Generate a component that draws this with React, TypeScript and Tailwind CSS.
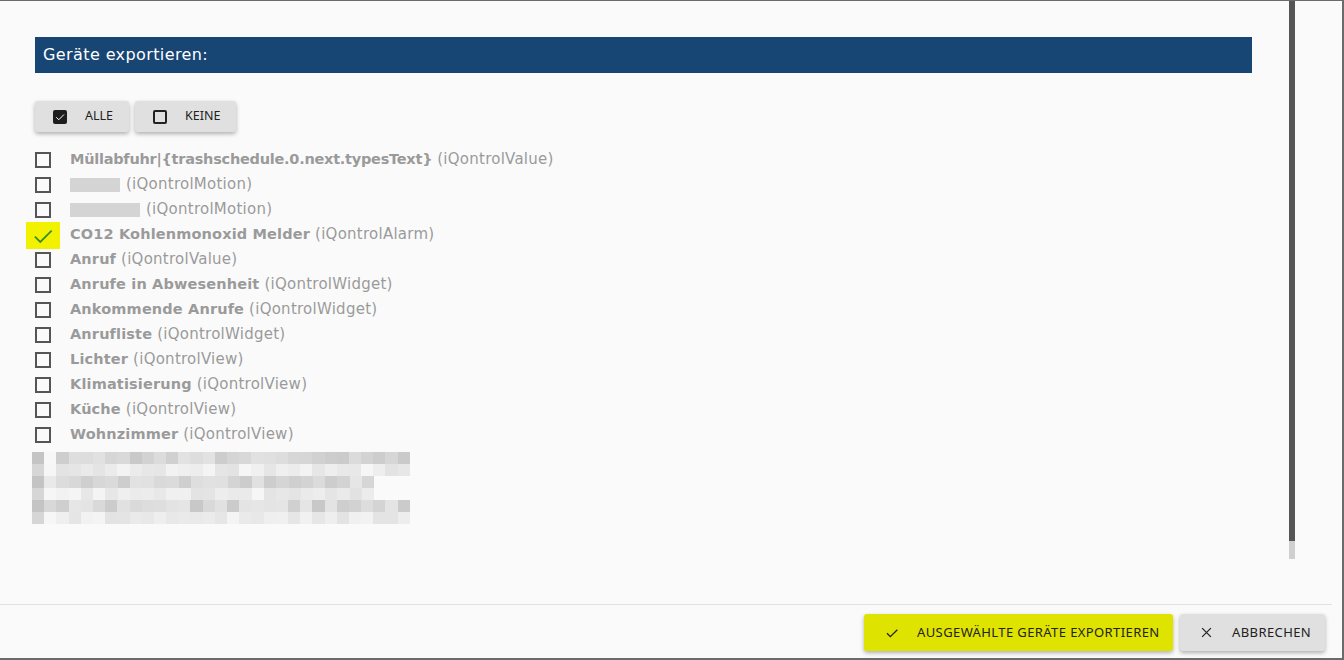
import React from "react";

type Device = { name: string; type: string; checked?: boolean; masked?: number; tight?: boolean };

const devices: Device[] = [
  { name: "Müllabfuhr|{trashschedule.0.next.typesText}", type: "iQontrolValue", tight: true },
  { name: "", type: "iQontrolMotion", masked: 50 },
  { name: "", type: "iQontrolMotion", masked: 70 },
  { name: "CO12 Kohlenmonoxid Melder", type: "iQontrolAlarm", checked: true },
  { name: "Anruf", type: "iQontrolValue" },
  { name: "Anrufe in Abwesenheit", type: "iQontrolWidget" },
  { name: "Ankommende Anrufe", type: "iQontrolWidget" },
  { name: "Anrufliste", type: "iQontrolWidget" },
  { name: "Lichter", type: "iQontrolView" },
  { name: "Klimatisierung", type: "iQontrolView" },
  { name: "Küche", type: "iQontrolView" },
  { name: "Wohnzimmer", type: "iQontrolView" },
];

// deterministic pseudo-random grey tones for the redacted block
function shade(r: number, c: number) {
  const v = Math.sin(r * 91.7 + c * 13.3) * 43758.5453;
  const f = v - Math.floor(v);
  const dark = r % 2 === 0;
  const base = dark ? 200 : 226;
  const span = dark ? 30 : 20;
  let g = Math.round(base + f * span);
  if (c === 0) g = dark ? 196 : 214;
  if (c === 1) g = Math.min(g + 12, 246);
  return `rgb(${g},${g},${g})`;
}

function Redacted() {
  const rows = [0, 1, 2, 3, 4, 5];
  return (
    <div className="flex flex-col ml-[-3px] mt-[5px]">
      {rows.map((r) => {
        const narrow = r === 2 || r === 3;
        return (
          <div key={r} className={narrow ? "flex h-[12px] w-[342px]" : "flex h-[12px] w-[378px]"}>
            {Array.from({ length: narrow ? 28 : 31 }).map((_, c) => (
              <div
                key={c}
                className="flex-1 h-full"
                style={{ backgroundColor: c === 1 && r === 0 ? "#f7f7f7" : shade(r, c) }}
              />
            ))}
          </div>
        );
      })}
    </div>
  );
}

function CheckIcon({ className, width = 2 }: { className?: string; width?: number }) {
  return (
    <svg viewBox="0 0 24 24" className={className} fill="none" stroke="currentColor" strokeWidth={width}>
      <path d="M4.5 12.5l5 5L20 7" />
    </svg>
  );
}

export default function App() {
  const sans = { fontFamily: '"DejaVu Sans", sans-serif' };
  const ui = { fontFamily: '"Noto Sans", sans-serif' };
  return (
    <div className="w-[1344px] h-[660px] bg-[#fafafa] border-t border-r-2 border-b-2 border-[#6b6b6b] flex flex-col overflow-hidden">
      <div className="flex h-[603px]">
        <div className="w-[1252px] pl-[35px] pt-[36px] flex flex-col">
          <div className="h-[36px] bg-[#174574] flex items-center pl-[8px] text-white text-[16px] tracking-[0.4px]" style={sans}>
            Geräte exportieren:
          </div>

          <div className="flex gap-[6px] mt-[28px]" style={ui}>
            <button className="h-[31px] w-[94px] bg-[#e0e0e0] rounded-[3px] shadow-[0_2px_4px_rgba(0,0,0,0.3)] flex items-center pl-[18px] text-[12.5px] text-[#222]">
              <span className="w-[14px] h-[14px] bg-[#1e1e1e] rounded-[2px] flex items-center justify-center text-white">
                <CheckIcon className="w-[12px] h-[12px]" />
              </span>
              <span className="ml-[18px]">ALLE</span>
            </button>
            <button className="h-[31px] w-[101px] bg-[#e0e0e0] rounded-[3px] shadow-[0_2px_4px_rgba(0,0,0,0.3)] flex items-center pl-[18px] text-[12.5px] text-[#222]">
              <span className="w-[14px] h-[14px] border-2 border-[#222] rounded-[2px]" />
              <span className="ml-[18px]">KEINE</span>
            </button>
          </div>

          <div className="flex flex-col mt-[15px]" style={sans}>
            {devices.map((d, i) => (
              <div key={i} className="h-[25px] flex items-center text-[#9a9a9a] whitespace-nowrap">
                <div className="w-[35px] flex items-center">
                  {d.checked ? (
                    <div className="w-[34px] h-[27px] bg-[#f2f200] ml-[-9px] mt-[2px] flex items-center justify-center text-[#3a8c2a]">
                      <CheckIcon className="w-[26px] h-[26px]" width={1.6} />
                    </div>
                  ) : (
                    <div className="w-[16px] h-[16px] border-2 border-[#555]" />
                  )}
                </div>
                {d.masked ? (
                  <span className="h-[14px] bg-[#d4d4d4] mr-[1px]" style={{ width: d.masked }} />
                ) : null}
                {d.name && (
                  <span className={d.tight ? "font-bold text-[14.5px] tracking-[-0.25px]" : "font-bold text-[14.5px] tracking-[0.15px]"}>
                    {d.name}
                  </span>
                )}
                <span className="ml-[5px] text-[15px] tracking-[0.25px]">({d.type})</span>
              </div>
            ))}
          </div>

          <Redacted />
        </div>

        <div className="ml-[37px] w-[6px] flex flex-col">
          <div className="h-[540px] bg-[#555]" />
          <div className="h-[18px] bg-[#cfcfcf]" />
        </div>
      </div>

      <div className="mr-[10px] border-t border-[#e2e2e2] flex justify-end gap-[7px] pt-[9px] pr-[7px]" style={ui}>
        <button className="h-[37px] w-[309px] bg-[#dfe300] rounded-[3px] shadow-[0_2px_4px_rgba(0,0,0,0.3)] flex items-center pl-[20px] text-[13px] text-[#222] tracking-[0.4px]">
          <CheckIcon className="w-[16px] h-[16px]" />
          <span className="ml-[17px]">AUSGEWÄHLTE GERÄTE EXPORTIEREN</span>
        </button>
        <button className="h-[37px] w-[145px] bg-[#e0e0e0] rounded-[3px] shadow-[0_2px_4px_rgba(0,0,0,0.3)] flex items-center pl-[19px] text-[13px] text-[#222] tracking-[0.4px]">
          <svg viewBox="0 0 24 24" className="w-[15px] h-[15px]" fill="none" stroke="currentColor" strokeWidth={2}>
            <path d="M5 5l14 14M19 5L5 19" />
          </svg>
          <span className="ml-[18px]">ABBRECHEN</span>
        </button>
      </div>
    </div>
  );
}
